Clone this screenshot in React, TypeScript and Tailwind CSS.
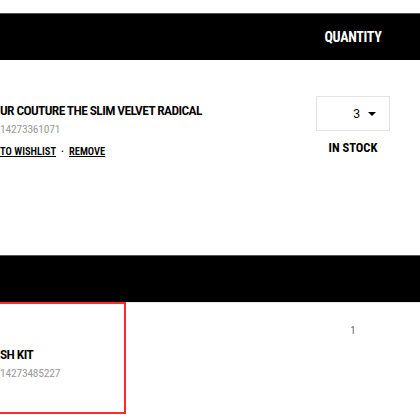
const font = { fontFamily: "'Liberation Sans Narrow', 'Roboto Condensed', 'DejaVu Sans Condensed', Roboto, sans-serif" };

const App = () => {
  return (
    <div className="w-[420px] h-[420px] overflow-hidden bg-white relative" style={font}>
      <div className="h-[13px]" />
      <div className="h-[47px] bg-black border-t border-[#555] flex items-center justify-end">
        <div className="w-[74px] mr-[30px] text-center text-white font-bold text-[14px] tracking-[-0.3px]">QUANTITY</div>
      </div>

      <div className="flex h-[195px]">
        <div className="flex-1 pt-[42px]">
          <p className="text-[13.5px] font-semibold text-black leading-[17px] tracking-[-0.6px]">UR COUTURE THE SLIM VELVET RADICAL</p>
          <p className="text-[11.5px] text-[#9a9a9a] leading-[14px] mt-[3px] tracking-[-0.2px]">14273361071</p>
          <div className="mt-[8px] flex items-center gap-[5px] text-[10.5px] font-semibold text-black">
            <span className="underline">TO WISHLIST</span>
            <span>·</span>
            <span className="underline">REMOVE</span>
          </div>
        </div>
        <div className="w-[74px] mr-[30px] pt-[36px] flex flex-col items-center">
          <div className="w-[74px] h-[35px] border border-[#e3e3e3] flex items-center justify-end pr-[13px] gap-[8px]">
            <span className="text-[12px] text-black" style={{ fontFamily: "'Liberation Sans', Arial, sans-serif" }}>3</span>
            <span className="w-0 h-0 border-l-[4px] border-r-[4px] border-t-[4px] border-l-transparent border-r-transparent border-t-black" />
          </div>
          <div className="mt-[8px] text-[12.5px] font-bold text-black">IN STOCK</div>
        </div>
      </div>

      <div className="h-[47px] bg-black border-t border-[#555]" />
      <div className="flex border-t border-[#e6e6e6]">
        <div className="w-[126px] h-[112px] -mt-px border-2 border-l-0 border-[#ff2a2a] pt-[42px]">
          <p className="text-[13.5px] font-semibold text-black leading-[17px] tracking-[-0.6px]">SH KIT</p>
          <p className="text-[11.5px] text-[#9a9a9a] leading-[14px] mt-[3px] tracking-[-0.2px]">14273485227</p>
        </div>
        <div className="flex-1 flex justify-end">
          <div className="w-[74px] mr-[30px] text-center pt-[20px] text-[10px] text-[#6b5550]">1</div>
        </div>
      </div>
    </div>
  );
};

export default App;
